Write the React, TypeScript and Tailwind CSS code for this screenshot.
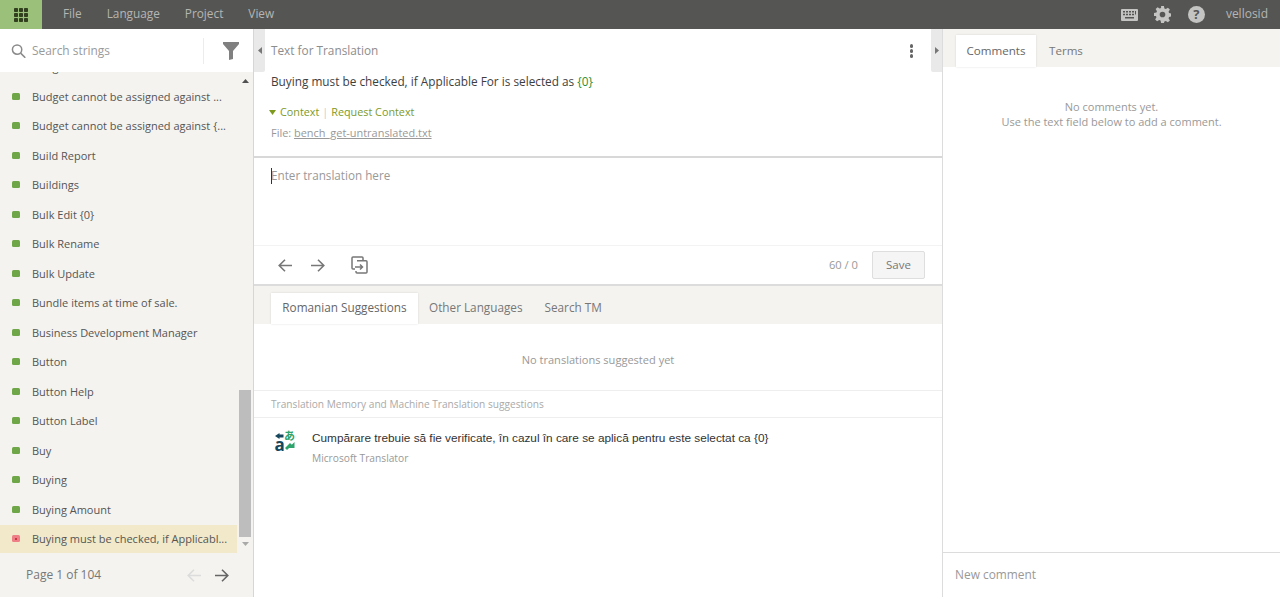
import React from "react";

const rows = [
  "Budget cannot be assigned against ...",
  "Budget cannot be assigned against {...",
  "Build Report",
  "Buildings",
  "Bulk Edit {0}",
  "Bulk Rename",
  "Bulk Update",
  "Bundle items at time of sale.",
  "Business Development Manager",
  "Button",
  "Button Help",
  "Button Label",
  "Buy",
  "Buying",
  "Buying Amount",
];

function ArrowL({ className = "" }: { className?: string }) {
  return (
    <svg width="14" height="13" viewBox="0 0 14 13" fill="none" stroke="currentColor" strokeWidth="1.6" className={className}>
      <path d="M14 6.500H1.200M7 .7 1.200 6.500 7 12.300" />
    </svg>
  );
}
function ArrowR({ className = "" }: { className?: string }) {
  return (
    <svg width="14" height="13" viewBox="0 0 14 13" fill="none" stroke="currentColor" strokeWidth="1.6" className={className}>
      <path d="M0 6.500h12.800M7 .7l5.800 5.800L7 12.300" />
    </svg>
  );
}

export default function App() {
  return (
    <div className="h-[597px] w-[1280px] overflow-hidden flex flex-col bg-white font-['Open_Sans',sans-serif] text-[11px] text-[#555]">
      {/* top bar */}
      <div className="h-[29px] shrink-0 bg-[#555553] flex items-center text-[#b5b5b3]">
        <div className="w-[42px] h-full bg-[#9bc07a] flex items-center justify-center">
          <svg width="14" height="14" viewBox="0 0 14 14" fill="#33401f">
            {[0, 5, 10].map((x) =>
              [0, 5, 10].map((y) => <rect key={`${x}-${y}`} x={x} y={y} width="4" height="4" rx="0.7" />)
            )}
          </svg>
        </div>
        <div className="flex items-center gap-[25px] ml-[21px] pb-[1px] text-[11.800px]">
          <span>File</span>
          <span>Language</span>
          <span>Project</span>
          <span>View</span>
        </div>
        <div className="ml-auto flex items-center mr-[12px] text-[12px]">
          <svg width="17" height="12" viewBox="0 0 17 12" fill="#c4c4c2" className="mr-[16px]">
            <path fillRule="evenodd" d="M1 0h15a1 1 0 0 1 1 1v10a1 1 0 0 1-1 1H1a1 1 0 0 1-1-1V1a1 1 0 0 1 1-1Zm1 2v1.500h2V2H2Zm3 0v1.500h2V2H5Zm3 0v1.500h2V2H8Zm3 0v1.500h2V2h-2Zm3 0v3.500h1V2h-1ZM2 4.800v1.500h2V4.800H2Zm3 0v1.500h2V4.800H5Zm3 0v1.500h2V4.800H8Zm3 0v1.500h2V4.800h-2ZM4 8v1.500h9V8H4Z" />
          </svg>
          <svg width="17" height="17" viewBox="0 0 24 24" fill="#c4c4c2" className="mr-[17px]">
            <path fillRule="evenodd" d="M10 0h4l.7 3.400 2 .8L19.600 2.300l2.800 2.800-1.900 2.900.8 2 3.400.7v4l-3.400.7-.8 2 1.900 2.900-2.800 2.800-2.900-1.900-2 .8L14 24h-4l-.7-3.400-2-.8-2.900 1.900-2.800-2.800 1.900-2.900-.8-2L0 14v-4l3.400-.7.8-2-1.900-2.900 2.800-2.800 2.900 1.900 2-.8L10 0Zm2 8a4 4 0 1 0 0 8 4 4 0 0 0 0-8Z" />
          </svg>
          <div className="w-[17px] h-[17px] rounded-full bg-[#c4c4c2] flex items-center justify-center text-[13px] font-bold text-[#555553] leading-none mr-[21px]">?</div>
          <span className="pb-[1px]">vellosid</span>
        </div>
      </div>

      <div className="flex-1 flex min-h-0">
        {/* left */}
        <div className="w-[254px] shrink-0 flex flex-col bg-[#f4f3ef] border-r border-[#d6d6d6]">
          <div className="h-[43px] shrink-0 bg-white flex items-center relative">
            <svg width="15" height="14" viewBox="0 0 16 15" fill="none" stroke="#8a8a8a" strokeWidth="1.600" className="ml-[11px] mt-[1px]">
              <circle cx="6.500" cy="6" r="5" />
              <path d="m10.300 9.800 5 5" />
            </svg>
            <span className="ml-[6px] text-[#9a9a9a] text-[11.900px] mt-[1px]">Search strings</span>
            <div className="ml-auto w-px h-[26px] bg-[#ececec] mr-[19px]" />
            <svg width="16" height="18" viewBox="0 0 16 18" fill="#808080" className="mr-[14px]">
              <path d="M0 0h16v2L10 9v8l-4 1V9L0 2V0Z" />
            </svg>
          </div>
          <div className="flex-1 min-h-0 flex">
            <div className="flex-1 min-w-0 overflow-hidden">
              <div className="h-[10px] overflow-hidden relative">
                <span className="absolute left-[32px] -top-[13px]">Budget</span>
              </div>
              {rows.map((r) => (
                <div key={r} className="h-[29.500px] flex items-center pl-[12px] whitespace-nowrap">
                  <span className="w-[8px] h-[7px] rounded-[1.500px] bg-[#6fa648] shrink-0 -mt-[1px]" />
                  <span className="ml-[12px]">{r}</span>
                </div>
              ))}
              <div className="h-[29.500px] flex items-center pl-[12px] whitespace-nowrap bg-[#f1e9c9]">
                <span className="w-[8px] h-[7px] rounded-[1.500px] bg-[#ee7f86] shrink-0 -mt-[1px] flex items-center justify-center">
                  <span className="w-[2px] h-[2px] rounded-full bg-[#c01b2b]" />
                </span>
                <span className="ml-[12px]">Buying must be checked, if Applicabl...</span>
              </div>
            </div>
            <div className="w-[16px] shrink-0 flex flex-col">
              <div className="h-[318px] pt-[7px] w-[12px] ml-[2px] flex justify-center">
                <svg width="7" height="4" viewBox="0 0 7 4" fill="#505050">
                  <path d="M3.500 0 7 4H0z" />
                </svg>
              </div>
              <div className="h-[147px] w-[12px] ml-[2px] bg-[#bdbdbd]" />
              <div className="flex-1 pt-[5px] w-[12px] ml-[2px] flex justify-center">
                <svg width="7" height="4" viewBox="0 0 7 4" fill="#a9a9a9" className="block">
                  <path d="M0 0h7L3.500 4z" />
                </svg>
              </div>
            </div>
          </div>
          <div className="h-[44px] shrink-0 flex items-center pl-[26px] text-[12px]">
            <span className="text-[#777]">Page 1 of 104</span>
            <ArrowL className="ml-auto text-[#dcdcdc]" />
            <ArrowR className="ml-[14px] mr-[24px] text-[#666]" />
          </div>
        </div>

        {/* centre */}
        <div className="w-[688px] shrink-0 flex flex-col">
          <div className="h-[129px] shrink-0 relative px-[17px] border-b-2 border-[#d8d8d8]">
            <div className="absolute left-0 top-0 w-[11px] h-[43px] bg-[#e9e9e9] rounded-br-[2px] flex items-center justify-center">
              <svg width="4" height="7" viewBox="0 0 4 7" fill="#777"><path d="M4 0v7L0 3.500z" /></svg>
            </div>
            <div className="absolute right-0 top-0 w-[11px] h-[43px] bg-[#e9e9e9] rounded-bl-[2px] flex items-center justify-center">
              <svg width="4" height="7" viewBox="0 0 4 7" fill="#777"><path d="M0 0v7l4-3.500z" /></svg>
            </div>
            <div className="absolute right-[29px] top-[15px] flex flex-col gap-[1.500px]">
              <span className="w-[3.500px] h-[3.500px] rounded-full bg-[#666]" />
              <span className="w-[3.500px] h-[3.500px] rounded-full bg-[#666]" />
              <span className="w-[3.500px] h-[3.500px] rounded-full bg-[#666]" />
            </div>
            <div className="pt-[12px] h-[40px] text-[11.800px] text-[#8d8d8d] leading-[18px]">Text for Translation</div>
            <div className="h-[24px] text-[11.800px] text-[#3e3e3e] leading-[24px]">
              Buying must be checked, if Applicable For is selected as <span className="text-[#2f8f2f]">{"{0}"}</span>
            </div>
            <div className="mt-[9px] h-[20px] flex items-center text-[10.800px] text-[#7d9a1f] -ml-[2px]">
              <svg width="7" height="5" viewBox="0 0 7 5" fill="#7d9a1f" className="mr-[4px]"><path d="M0 0h7L3.500 5z" /></svg>
              <span>Context</span>
              <span className="mx-[3px] text-[#ccc]">|</span>
              <span>Request Context</span>
            </div>
            <div className="mt-[1px] text-[#999] text-[10.950px] leading-[20px]">
              File: <span className="underline">bench_get-untranslated.txt</span>
            </div>
          </div>
          <div className="h-[128px] shrink-0 flex flex-col border-b-2 border-[#dcdcdc]">
            <div className="h-[87px] shrink-0 mx-[17px] pt-[8px] text-[11.700px] text-[#999] leading-[18px] relative">
              <span className="absolute left-0 top-[10px] w-px h-[16px] bg-[#333]" />
              Enter translation here
            </div>
            <div className="flex-1 flex items-center border-t border-[#f3f3f3] pl-[24px] pr-[17px]">
              <ArrowL className="text-[#777]" />
              <ArrowR className="ml-[19px] text-[#777]" />
              <svg width="17" height="18" viewBox="0 0 17 18" fill="none" stroke="#777" strokeWidth="1.500" className="ml-[26px]">
                <path d="M4 13H2a1 1 0 0 1-1-1V2a1 1 0 0 1 1-1h9a1 1 0 0 1 1 1v2" />
                <path d="M6 4.800h9a1 1 0 0 1 1 1V16a1 1 0 0 1-1 1H6a1 1 0 0 1-1-1v-1" />
                <path d="M4 11h7M9 8.500l2.500 2.500L9 13.500" />
              </svg>
              <span className="ml-auto text-[11.200px] text-[#999]">60 / 0</span>
              <div className="ml-[14px] w-[53px] h-[28px] bg-[#f5f5f5] border border-[#dedede] rounded-[2px] flex items-center justify-center text-[11.500px] text-[#777]">Save</div>
            </div>
          </div>
          <div className="h-[38px] shrink-0 bg-[#f4f3ef] flex items-end pl-[17px] text-[11.750px]">
            <div className="h-[31px] w-[147px] pb-[1px] bg-white flex items-center justify-center shadow-[0_0_2px_rgba(0,0,0,0.12)] text-[#666]">Romanian Suggestions</div>
            <div className="h-[31px] ml-[11px] pb-[1px] flex items-center text-[#777]">Other Languages</div>
            <div className="h-[31px] ml-[22px] pb-[1px] flex items-center text-[#777]">Search TM</div>
          </div>
          <div className="h-[67px] shrink-0 pt-[6px] flex items-center justify-center border-b border-[#eeeeee] text-[11.050px] text-[#999]">
            No translations suggested yet
          </div>
          <div className="h-[27px] shrink-0 pt-[1px] flex items-center pl-[17px] border-b border-[#eeeeee] text-[10.130px] text-[#aaa]">
            Translation Memory and Machine Translation suggestions
          </div>
          <div className="flex pl-[21px] pt-[11px]">
            <svg width="21" height="22" viewBox="0 0 21 22" className="shrink-0 mt-[1px] overflow-visible">
              <path d="M4.500 3v6L0 6z" fill="#16475c" />
              <rect x="4" y="4.500" width="4.500" height="3" fill="#16475c" />
              <text x="-0.500" y="21" fontSize="17" fontWeight="700" fill="#16475c" fontFamily="Open Sans">a</text>
              <text x="9" y="10" fontSize="11" fontWeight="700" fill="#2ea36c" fontFamily="Noto Sans CJK JP">あ</text>
              <path d="M19.500 13v6h-6zM10 19l5-5 2 2-5 5z" fill="#2ea36c" transform="translate(0 -1)" />
            </svg>
            <div className="ml-[16px]">
              <div className="font-['Liberation_Sans',sans-serif] text-[11.800px] text-[#333] leading-[18px]">
                Cumpărare trebuie să fie verificate, în cazul în care se aplică pentru este selectat ca {"{0}"}
              </div>
              <div className="mt-[4px] text-[10.200px] text-[#999] leading-[14px]">Microsoft Translator</div>
            </div>
          </div>
        </div>

        {/* right */}
        <div className="flex-1 flex flex-col border-l border-[#dcdcdc]">
          <div className="h-[38px] shrink-0 bg-[#f4f3ef] flex items-end pl-[13px] text-[11.600px]">
            <div className="h-[32px] w-[80px] pb-[1px] bg-white flex items-center justify-center shadow-[0_0_2px_rgba(0,0,0,0.12)] text-[#666]">Comments</div>
            <div className="h-[32px] ml-[13px] pb-[1px] flex items-center text-[#777]">Terms</div>
          </div>
          <div className="flex-1 pt-[32px] text-center text-[11px] text-[#999] leading-[15px]">
            <div>No comments yet.</div>
            <div>Use the text field below to add a comment.</div>
          </div>
          <div className="h-[45px] shrink-0 border-t border-[#dcdcdc] flex items-center pl-[12px] text-[11.900px] text-[#999]">New comment</div>
        </div>
      </div>
    </div>
  );
}
